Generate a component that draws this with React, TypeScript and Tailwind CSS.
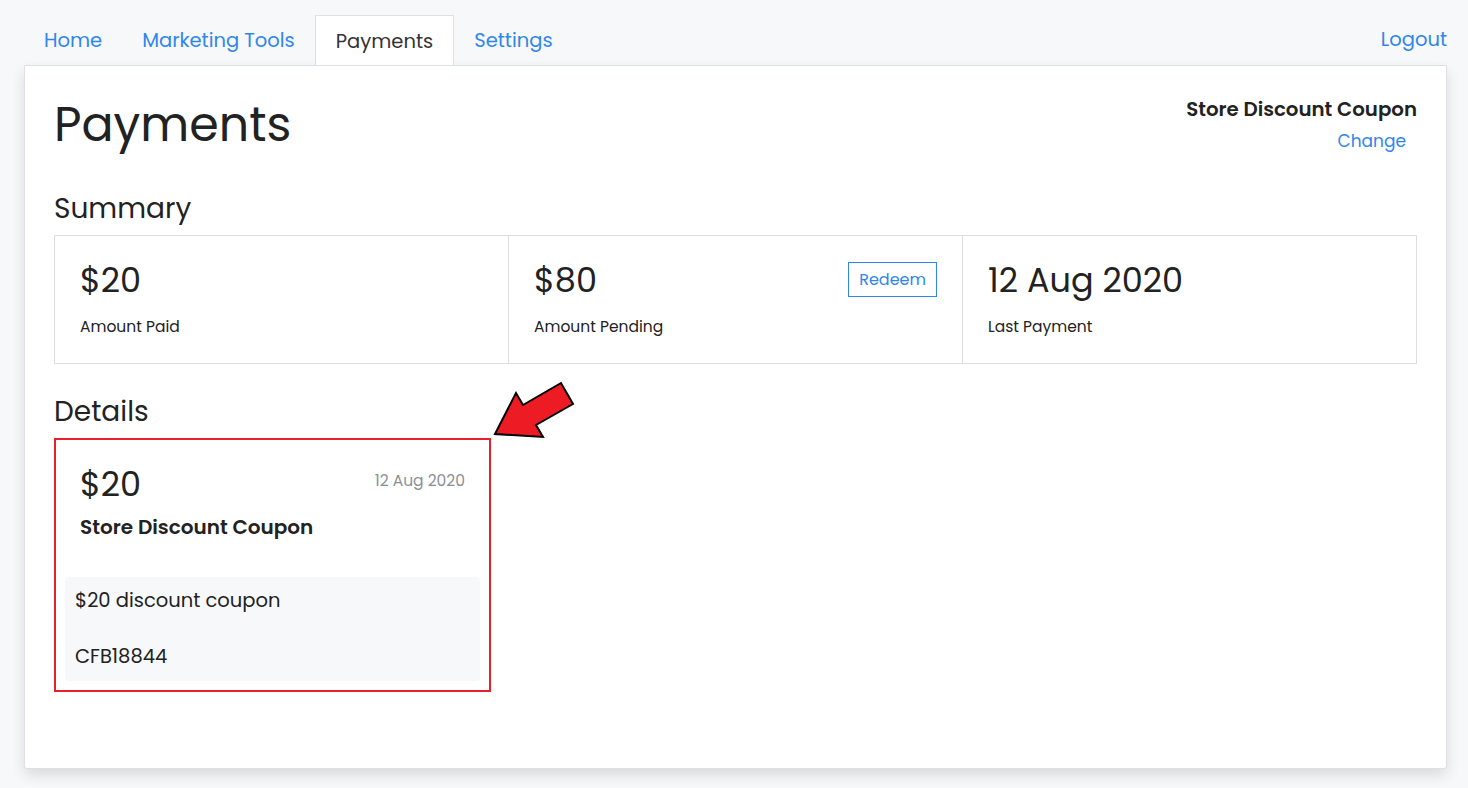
import React from "react";

const font = { fontFamily: '"Poppins", Inter, "Noto Sans", sans-serif' };

function SummaryCell({ value, label, action }: { value: string; label: string; action?: React.ReactNode }) {
  return (
    <div className="flex-1 px-[25px] pt-[24px] pb-[26px] border-r border-[#dedede] last:border-r-0">
      <div className="flex items-start justify-between">
        <div className="text-[33.5px] leading-[42px] text-[#222]">{value}</div>
        {action}
      </div>
      <div className="mt-[15px] text-[15.5px] leading-[20px] text-[#222]">{label}</div>
    </div>
  );
}

export default function App() {
  return (
    <div className="min-h-[788px] w-full bg-[#f7f8fa] pt-[15px] pl-[24px] pr-[21px]" style={font}>
      {/* tabs */}
      <div className="flex items-end justify-between">
        <div className="flex">
          <a className="h-[50px] px-[20px] pt-[2px] flex items-center text-[19.5px] text-[#2f86eb]">Home</a>
          <a className="h-[50px] px-[20px] pt-[2px] flex items-center text-[19.5px] text-[#2f86eb]">Marketing Tools</a>
          <a className="h-[50px] px-[20px] pt-[2px] flex items-center text-[19.5px] text-[#333] bg-white border border-b-0 border-[#dde1e6] -mb-px relative z-10">
            Payments
          </a>
          <a className="h-[50px] px-[20px] pt-[2px] flex items-center text-[19.5px] text-[#2f86eb]">Settings</a>
        </div>
        <a className="h-[50px] flex items-center text-[19.5px] text-[#2f86eb]">Logout</a>
      </div>

      {/* panel */}
      <div className="relative bg-white border border-[#dde1e6] rounded-b-[3px] shadow-[0_6px_14px_rgba(0,0,0,0.12)] h-[704px] px-[29px] pt-[26px]">
        <div className="flex justify-between">
          <h1 className="text-[47.5px] leading-[66px] text-[#222] font-normal">Payments</h1>
          <div className="flex flex-col items-end pt-[3px]">
            <div className="text-[19.8px] font-semibold text-[#222] leading-[28px]">Store Discount Coupon</div>
            <a className="mt-[6px] mr-[11px] text-[17px] text-[#2f86eb] leading-[24px]">Change</a>
          </div>
        </div>

        <h2 className="mt-[33px] text-[28px] leading-[36px] text-[#222]">Summary</h2>
        <div className="mt-[8px] flex border border-[#dedede]">
          <SummaryCell value="$20" label="Amount Paid" />
          <SummaryCell
            value="$80"
            label="Amount Pending"
            action={
              <button className="mt-[2px] h-[35px] px-[10px] border border-[#2f86eb] text-[16px] text-[#2f86eb] bg-white">
                Redeem
              </button>
            }
          />
          <SummaryCell value="12 Aug 2020" label="Last Payment" />
        </div>

        <h2 className="mt-[30px] text-[28px] leading-[36px] text-[#222]">Details</h2>
        <div className="relative mt-[8px] w-[437px] h-[254px] border-2 border-[#e8202a] p-[9px]">
          <div className="px-[15px] pt-[15px]">
            <div className="flex items-start justify-between">
              <div className="text-[33.5px] leading-[42px] text-[#222]">$20</div>
              <div className="pt-[7px] text-[15.5px] text-[#8a8f96] leading-[20px]">12 Aug 2020</div>
            </div>
            <div className="mt-[7px] text-[20px] font-semibold text-[#222] leading-[28px]">Store Discount Coupon</div>
          </div>
          <div className="mt-[36px] rounded-[4px] bg-[#f7f8fa] px-[10px] pt-[11px] pb-[10px] h-[104px]">
            <div className="text-[19.5px] text-[#222] leading-[26px]">$20 discount coupon</div>
            <div className="mt-[30px] text-[19.5px] text-[#222] leading-[26px]">CFB18844</div>
          </div>
          {/* callout arrow */}
          <svg className="absolute left-[434px] top-[-62px]" width="88" height="64" viewBox="0 0 88 64">
            <polygon
              points="5,56 26,15 33,27 71,5 83,26 46,47 53,59"
              fill="#ed1c24"
              stroke="#000"
              strokeWidth="2"
              strokeLinejoin="miter"
            />
          </svg>
        </div>
      </div>
    </div>
  );
}
